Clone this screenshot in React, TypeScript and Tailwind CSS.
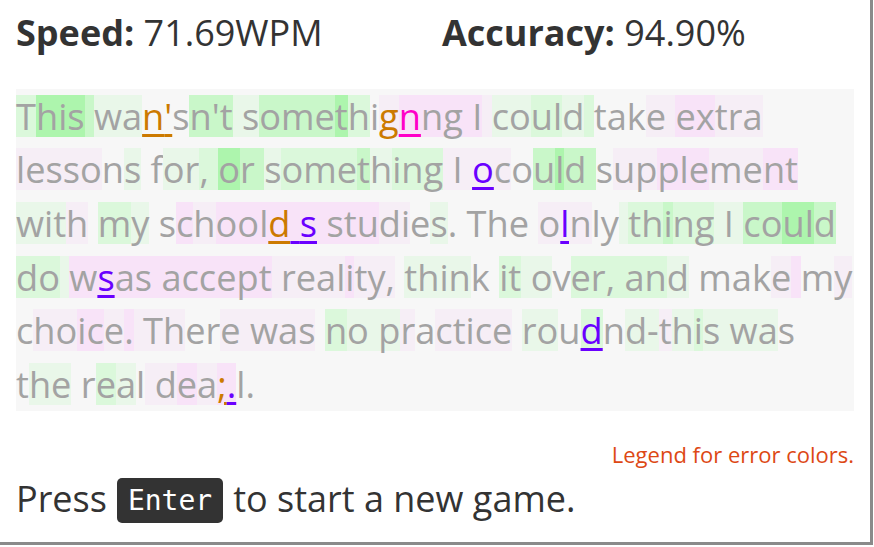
import React from "react";

// heat colours behind each typed character
const BG: Record<string, string> = {
  G: "bg-[#adf5ad]",
  g: "bg-[#c9f7c9]",
  h: "bg-[#dbf8db]",
  l: "bg-[#e9f7e9]",
  p: "bg-[#f6eef6]",
  P: "bg-[#f8e3f8]",
  ".": "",
};

const ERR: Record<string, string> = {
  o: "text-[#cc7a00] underline decoration-[3px] underline-offset-[4px]",
  m: "text-[#ff00c8] underline decoration-[3px] underline-offset-[4px]",
  v: "text-[#6a00ff] underline decoration-[3px] underline-offset-[4px]",
};

type Line = { text: string; bg: string; err: Record<number, string> };

const LINES: Line[] = [
  {
    text: "This wan'sn't somethignng I could take extra",
    bg: "hGGGgll...gggllgggGh.pPPPPPpllhhlh...ppPPppp",
    err: { 7: "o", 8: "o", 21: "o", 22: "m" },
  },
  {
    text: "lessons for, or something I ocould supplement",
    bg: "ppppp.l..llhhGgglhhhglhhhppppp.gGgg.ppPPPppPP",
    err: { 28: "v" },
  },
  {
    text: "with my schoold s studies. The olnly thing I could",
    bg: "lllp.hl..PpPPPPPPPPPPpp.l......ppp..lhhghhlllggGGg",
    err: { 14: "o", 15: "v", 16: "v", 32: "v" },
  },
  {
    text: "do wsas accept reality, think it over, and make my",
    bg: "hhlPPPPPPPPPPPpppppPppp.llll..hhll.hhhhhhl....pP.p",
    err: { 4: "v" },
  },
  {
    text: "choice. There was no practice roudnd-this was",
    bg: ".ppPPpPppp..ppppp.hlllp.ppppp.ll.h.llplhllll.",
    err: { 33: "v" },
  },
  {
    text: "the real dea;.l.",
    bg: ".ll..hl.ppPpPP..",
    err: { 12: "o", 13: "v" },
  },
];

function TypedLine({ line }: { line: Line }) {
  return (
    <div className="flex h-[53.6px] items-center whitespace-pre">
      {line.text.split("").map((ch, i) => {
        const e = line.err[i];
        return (
          <span
            key={i}
            className={`h-[42px] leading-[42px] ${BG[line.bg[i] ?? "."] ?? ""} ${e ? ERR[e] : ""}`}
          >
            {ch}
          </span>
        );
      })}
    </div>
  );
}

export default function App() {
  return (
    <div className="w-[873px] h-[545px] bg-white border-r-[3px] border-b-[3px] border-[#8a8a8a] px-4 text-[#333] font-['Open_Sans',sans-serif] overflow-hidden">
      <div className="flex pt-[11px] h-[89px] text-[36px] leading-[44px]">
        <div className="w-[426px] whitespace-nowrap">
          <span className="font-bold">Speed:</span> 71.69WPM
        </div>
        <div className="whitespace-nowrap">
          <span className="font-bold">Accuracy:</span> 94.90%
        </div>
      </div>

      <div className="bg-[#f7f7f7] text-[#a3a3a3] text-[36.2px]">
        {LINES.map((l, i) => (
          <TypedLine key={i} line={l} />
        ))}
      </div>

      <div className="mt-[31px] text-right text-[22px] leading-[24px] text-[#dd4814]">
        Legend for error colors.
      </div>

      <div className="mt-[12px] flex items-start text-[36px] leading-[42px]">
        <span>Press</span>
        <kbd className="mx-[10px] h-[45px] rounded-[5px] bg-[#333] px-[11px] text-white text-[28px] leading-[45px] font-['DejaVu_Sans_Mono',monospace]">
          Enter
        </kbd>
        <span>to start a new game.</span>
      </div>
    </div>
  );
}
